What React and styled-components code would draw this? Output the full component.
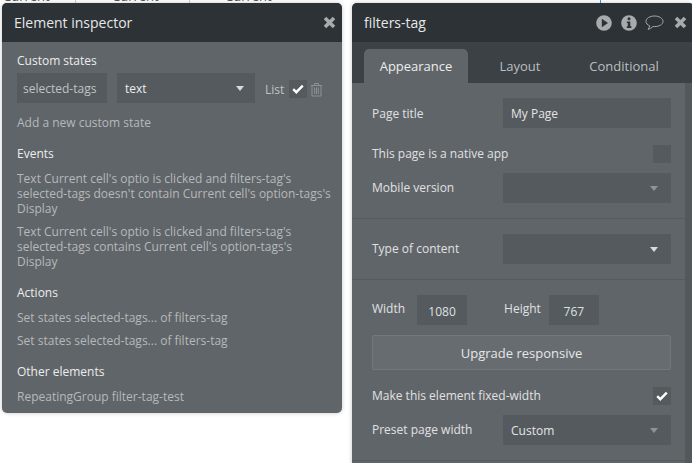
import React from 'react';
import styled, { createGlobalStyle } from 'styled-components';

const Global = createGlobalStyle`
  html, body { margin: 0; padding: 0; background: #fff; overflow: hidden; }
  body { font-family: "Open Sans", "Liberation Sans", sans-serif; }
  * { box-sizing: border-box; }
`;

const Page = styled.div`
  position: relative;
  width: 692px;
  height: 463px;
  overflow: hidden;
  padding: 3px 0 0 2px;
  display: flex;
  align-items: flex-start;
  gap: 10px;
`;

const Backdrop = styled.div`
  position: absolute;
  top: -11px;
  left: 0;
  width: 692px;
  height: 14px;
  font: 13px/14px "Open Sans", sans-serif;
  color: #555;
`;

const BackdropWord = styled.span`
  position: absolute;
  left: ${p => p.$x}px;
  top: 0;
`;

const BackdropLine = styled.span`
  position: absolute;
  left: ${p => p.$x}px;
  top: 0;
  width: 1px;
  height: 14px;
  background: ${p => p.$c || '#ccc'};
`;

const Panel = styled.section`
  position: relative;
  flex: none;
  width: ${p => p.$w}px;
  height: ${p => p.$h}px;
  background: #606569;
  border-radius: 5px 5px ${p => (p.$open ? '0 0' : '5px 5px')};
  box-shadow: 0 0 4px rgba(0, 0, 0, 0.22);
  overflow: hidden;
`;

const Header = styled.header`
  height: 39px;
  background: #2c3235;
  display: flex;
  align-items: center;
  padding: 0 ${p => p.$pr}px 0 12px;
  color: #e6e8e8;
  font-size: 14px;
`;

const Title = styled.div`
  flex: 1;
  margin-top: -1px;
`;

const HeaderIcons = styled.div`
  display: flex;
  align-items: center;
  color: #a8abad;
`;

const IconSlot = styled.span`
  display: flex;
  margin-left: ${p => p.$ml ?? 0}px;
`;

const Body = styled.div`
  padding: 11px 15px 0;
  font-size: 12px;
  color: #bcbfc1;
`;

const Heading = styled.div`
  color: #eceded;
  font-size: 12px;
  line-height: 16px;
`;

const StateRow = styled.div`
  display: flex;
  align-items: center;
  margin-top: 4px;
  height: 30px;
`;

const StateName = styled.div`
  width: 90px;
  height: 30px;
  background: #545a5d;
  padding-left: 6px;
  line-height: 31px;
  color: #c0c3c4;
`;

const StateType = styled.div`
  width: 138px;
  height: 30px;
  margin-left: 10px;
  background: #545a5d;
  padding: 0 11px 0 8px;
  display: flex;
  align-items: center;
  justify-content: space-between;
  color: #eceded;
`;

const Caret = styled.span`
  width: 0;
  height: 0;
  border-left: 4.5px solid transparent;
  border-right: 4.5px solid transparent;
  border-top: 5px solid ${p => (p.$dim ? '#8f9395' : '#d9dadb')};
`;

const ListLabel = styled.span`
  margin: 2px 0 0 10px;
  width: 24px;
  color: #c0c3c4;
`;

const CheckBox = styled.div`
  flex: none;
  width: 18px;
  height: 18px;
  background: #545a5d;
  display: flex;
  align-items: center;
  justify-content: center;
`;

const StateCheck = styled(CheckBox)`
  margin-top: 2px;
`;

const Trash = styled.svg`
  margin: 2px 0 0 3px;
  color: #8e9294;
`;

const Line = styled.div`
  line-height: 15px;
  white-space: nowrap;
`;

const Muted = styled.div`
  color: #b6b9bb;
  line-height: 16px;
  margin-top: ${p => p.$mt ?? 0}px;
`;

const HeadingAt = styled(Heading)`
  margin-top: ${p => p.$mt}px;
`;

const TabBar = styled.nav`
  height: 41px;
  background: #3b4144;
  padding: 7px 12px 0;
  display: flex;
  align-items: stretch;
`;

const Tab = styled.div`
  width: ${p => p.$w}px;
  background: ${p => (p.$active ? '#606569' : 'transparent')};
  border-radius: 5px 5px 0 0;
  color: ${p => (p.$active ? '#eceded' : '#bcbfc1')};
  font-size: 13px;
  display: flex;
  align-items: center;
  justify-content: center;
`;

const Scroll = styled.div`
  display: flex;
  height: 421px;
`;

const Content = styled.div`
  flex: 1;
  min-width: 0;
`;

const ScrollTrack = styled.div`
  flex: none;
  width: 9px;
  background: #53585b;
`;

const Section = styled.div`
  padding: 15px 14px 15px 20px;
  border-bottom: 1px solid #565b5e;
`;

const Row = styled.div`
  display: flex;
  align-items: center;
  justify-content: space-between;
  height: ${p => p.$h ?? 30}px;
  margin-top: ${p => p.$mt ?? 0}px;
  color: #e0e1e2;
  font-size: 12px;
`;

const Label = styled.span`
  margin-top: ${p => p.$mt ?? 0}px;
`;

const Field = styled.div`
  width: 168px;
  height: 30px;
  background: #545a5d;
  padding: 0 13px 0 8px;
  display: flex;
  align-items: center;
  justify-content: space-between;
  color: #e4e5e6;
`;

const NumField = styled.div`
  width: 50px;
  height: 30px;
  background: #545a5d;
  color: #dfe0e1;
  display: flex;
  align-items: center;
  justify-content: center;
  margin-left: ${p => p.$ml ?? 0}px;
  padding-top: 2px;
`;

const SizeRow = styled.div`
  display: flex;
  align-items: center;
  height: 30px;
  color: #e0e1e2;
  font-size: 12px;
`;

const SizeLabel = styled.span`
  margin-left: ${p => p.$ml ?? 0}px;
  margin-top: -3px;
`;

const UpgradeButton = styled.div`
  height: 35px;
  margin-top: 10px;
  background: #676c70;
  border: 1px solid #74787b;
  border-radius: 2px;
  color: #e6e7e8;
  font-size: 13px;
  display: flex;
  align-items: center;
  justify-content: center;
`;

const Check = () => (
  <svg width="12" height="10" viewBox="0 0 12 10">
    <path d="M1.2 5.2 4.3 8.2 10.8 1.6" fill="none" stroke="#fff" strokeWidth="2.4" />
  </svg>
);

const Close = () => (
  <svg width="13" height="13" viewBox="0 0 13 13">
    <path d="M2 2 11 11M11 2 2 11" fill="none" stroke="currentColor" strokeWidth="3.6" />
  </svg>
);

export default function App() {
  return (
    <Page>
      <Global />
      <Backdrop>
        <BackdropWord $x={3}>Current</BackdropWord>
        <BackdropLine $x={75} />
        <BackdropWord $x={112}>Current</BackdropWord>
        <BackdropLine $x={189} />
        <BackdropWord $x={225}>Current</BackdropWord>
        <BackdropLine $x={600} $c="#3a9bdc" />
      </Backdrop>

      <Panel $w={340} $h={410}>
        <Header $pr={6}>
          <Title>Element inspector</Title>
          <HeaderIcons>
            <Close />
          </HeaderIcons>
        </Header>
        <Body>
          <Heading>Custom states</Heading>
          <StateRow>
            <StateName>selected-tags</StateName>
            <StateType>
              text
              <Caret />
            </StateType>
            <ListLabel>List</ListLabel>
            <StateCheck>
              <Check />
            </StateCheck>
            <Trash width="13" height="15" viewBox="0 0 13 15">
              <path
                d="M1 3.5h11M4.5 3.5V1.5h4v2M2 3.5v10.5h9V3.5M4.7 5.5v6.5M6.5 5.5v6.5M8.3 5.5v6.5"
                fill="none"
                stroke="currentColor"
                strokeWidth="1"
              />
            </Trash>
          </StateRow>
          <Muted $mt={12}>Add a new custom state</Muted>
          <HeadingAt $mt={15}>Events</HeadingAt>
          <Muted $mt={9}>
            <Line>Text Current cell's optio is clicked and filters-tag's</Line>
            <Line>selected-tags doesn't contain Current cell's option-tags's</Line>
            <Line>Display</Line>
          </Muted>
          <Muted $mt={8}>
            <Line>Text Current cell's optio is clicked and filters-tag's</Line>
            <Line>selected-tags contains Current cell's option-tags's</Line>
            <Line>Display</Line>
          </Muted>
          <HeadingAt $mt={16}>Actions</HeadingAt>
          <Muted $mt={9}>Set states selected-tags... of filters-tag</Muted>
          <Muted $mt={7}>Set states selected-tags... of filters-tag</Muted>
          <HeadingAt $mt={15}>Other elements</HeadingAt>
          <Muted $mt={9}>RepeatingGroup filter-tag-test</Muted>
        </Body>
      </Panel>

      <Panel $w={342} $h={470} $open>
        <Header $pr={7}>
          <Title>filters-tag</Title>
          <HeaderIcons>
            <svg width="16" height="16" viewBox="0 0 16 16">
              <circle cx="8" cy="8" r="7.8" fill="currentColor" />
              <path d="M5.8 3.8 12 8 5.8 12.2Z" fill="#2c3235" />
            </svg>
            <IconSlot $ml={9}>
              <svg width="16" height="16" viewBox="0 0 16 16">
                <circle cx="8" cy="8" r="7.8" fill="currentColor" />
                <circle cx="8" cy="3.8" r="1.5" fill="#2c3235" />
                <path d="M5.8 6.5H9.3V11.2H10.4V12.9H5.8V11.2H6.8V8.1H5.8Z" fill="#2c3235" />
              </svg>
            </IconSlot>
            <IconSlot $ml={8}>
              <svg width="19" height="16" viewBox="0 0 19 16">
                <path
                  d="M9.5 1C5 1 1 3.2 1 6.4c0 2 1.5 3.5 3.7 4.4-.2 1.3-.9 2.5-1.6 3.6 1.8-.5 3.7-1.7 4.8-2.9.5.1 1 .1 1.6.1 4.5 0 8.5-2.1 8.5-5.2S14 1 9.5 1Z"
                  fill="none"
                  stroke="currentColor"
                  strokeWidth="1"
                />
              </svg>
            </IconSlot>
            <IconSlot $ml={10}>
              <Close />
            </IconSlot>
          </HeaderIcons>
        </Header>
        <TabBar>
          <Tab $w={104} $active>Appearance</Tab>
          <Tab $w={104}>Layout</Tab>
          <Tab $w={104}>Conditional</Tab>
        </TabBar>
        <Scroll>
          <Content>
            <Section>
              <Row>
                <Label>Page title</Label>
                <Field>My Page</Field>
              </Row>
              <Row $h={18} $mt={17}>
                <Label $mt={-2}>This page is a native app</Label>
                <CheckBox />
              </Row>
              <Row $mt={10}>
                <Label $mt={-1}>Mobile version</Label>
                <Field>
                  <span />
                  <Caret $dim />
                </Field>
              </Row>
            </Section>
            <Section>
              <Row>
                <Label $mt={-2}>Type of content</Label>
                <Field>
                  <span />
                  <Caret />
                </Field>
              </Row>
            </Section>
            <Section>
              <SizeRow>
                <SizeLabel>Width</SizeLabel>
                <NumField $ml={12}>1080</NumField>
                <SizeLabel $ml={37}>Height</SizeLabel>
                <NumField $ml={8}>767</NumField>
              </SizeRow>
              <UpgradeButton>Upgrade responsive</UpgradeButton>
              <Row $h={18} $mt={17}>
                <Label $mt={-2}>Make this element fixed-width</Label>
                <CheckBox>
                  <Check />
                </CheckBox>
              </Row>
              <Row $mt={10}>
                <Label $mt={-2}>Preset page width</Label>
                <Field>
                  Custom
                  <Caret $dim />
                </Field>
              </Row>
            </Section>
          </Content>
          <ScrollTrack />
        </Scroll>
      </Panel>
    </Page>
  );
}
